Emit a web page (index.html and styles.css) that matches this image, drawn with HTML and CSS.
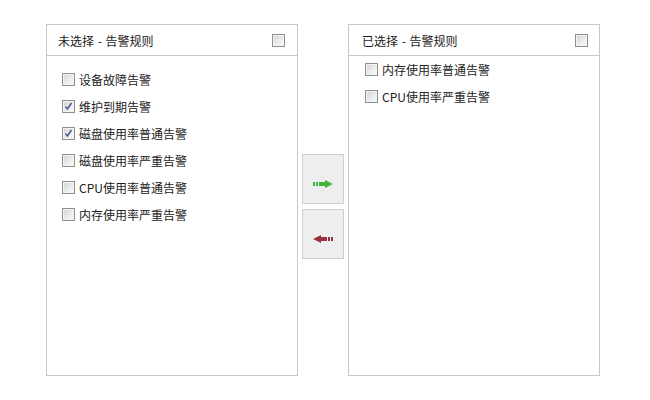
FILE: index.html
```html
<!DOCTYPE html>
<html lang="zh-CN">

<head>
    <meta charset="UTF-8" />
    <meta name="viewport" content="width=device-width, initial-scale=1.0" />
    <title>告警规则</title>
    <link rel="stylesheet" href="styles.css">
</head>

<body>
    <div class="transfer">
        <div class="panel panel-left">
            <div class="panel-head">
                <span>未选择 - 告警规则</span>
                <input type="checkbox" class="chk">
            </div>
            <ul class="rule-list">
                <li><label><input type="checkbox" class="chk">设备故障告警</label></li>
                <li><label><input type="checkbox" class="chk" checked>维护到期告警</label></li>
                <li><label><input type="checkbox" class="chk" checked>磁盘使用率普通告警</label></li>
                <li><label><input type="checkbox" class="chk">磁盘使用率严重告警</label></li>
                <li><label><input type="checkbox" class="chk">CPU使用率普通告警</label></li>
                <li><label><input type="checkbox" class="chk">内存使用率严重告警</label></li>
            </ul>
        </div>

        <div class="actions">
            <button class="move-btn" title="添加">
                <svg width="20" height="8" viewBox="0 0 20 8">
                    <rect x="0" y="2" width="2" height="4" fill="#3fb43f" />
                    <rect x="3" y="2" width="2" height="4" fill="#3fb43f" />
                    <rect x="6" y="2" width="7" height="4" fill="#3fb43f" />
                    <polygon points="12,0 20,4 12,8" fill="#3fb43f" />
                </svg>
            </button>
            <button class="move-btn" title="移除">
                <svg width="20" height="8" viewBox="0 0 20 8">
                    <polygon points="8,0 0,4 8,8" fill="#9c2f3d" />
                    <rect x="7" y="2" width="7" height="4" fill="#9c2f3d" />
                    <rect x="15" y="2" width="2" height="4" fill="#9c2f3d" />
                    <rect x="18" y="2" width="2" height="4" fill="#9c2f3d" />
                </svg>
            </button>
        </div>

        <div class="panel panel-right">
            <div class="panel-head">
                <span>已选择 - 告警规则</span>
                <input type="checkbox" class="chk">
            </div>
            <ul class="rule-list">
                <li><label><input type="checkbox" class="chk">内存使用率普通告警</label></li>
                <li><label><input type="checkbox" class="chk">CPU使用率严重告警</label></li>
            </ul>
        </div>
    </div>
</body>

</html>
```

FILE: styles.css
```css
body {
    margin: 0;
    background: #fff;
    color: #222;
    font-family: "Noto Sans CJK SC", "Microsoft YaHei", sans-serif;
    font-size: 12px;
}

.transfer {
    display: flex;
    align-items: flex-start;
    padding: 24px 0 0 46px;
}

.panel {
    width: 250px;
    height: 350px;
    border: 1px solid #c8c8c8;
    background: #fff;
}

.panel-head {
    display: flex;
    align-items: center;
    justify-content: space-between;
    height: 30px;
    border-bottom: 1px solid #c8c8c8;
    padding: 0 12px 0 11px;
}

.panel-right .panel-head {
    padding: 0 11px 0 13px;
}

.panel-head span {
    font-size: 12px;
    word-spacing: 1px;
    color: #1a1a1a;
}

.rule-list {
    list-style: none;
    margin: 0;
    padding: 10px 0 0 15px;
}

.panel-right .rule-list {
    padding: 0 0 0 16px;
}

.rule-list li {
    height: 27px;
    line-height: 27px;
}

.rule-list label {
    display: flex;
    align-items: center;
    height: 27px;
    cursor: pointer;
}

.chk {
    -webkit-appearance: none;
    appearance: none;
    width: 13px;
    height: 13px;
    margin: 0;
    border: 1px solid #8e8f8f;
    box-sizing: border-box;
    background: linear-gradient(135deg, #d2d2d2 0%, #eeeeee 60%, #fafafa 100%);
    box-shadow: inset 0 0 0 1px #f4f4f4;
    flex: none;
    cursor: pointer;
}

.rule-list .chk {
    margin-right: 4px;
}

.chk:checked {
    background: url("data:image/svg+xml,%3Csvg xmlns='http://www.w3.org/2000/svg' width='11' height='11' viewBox='0 0 11 11'%3E%3Cpath d='M2.5 5.5 L4.5 8 L8.5 2' fill='none' stroke='%234a5d99' stroke-width='1.6'/%3E%3C/svg%3E") center / 11px 11px no-repeat,
        linear-gradient(135deg, #d2d2d2 0%, #eeeeee 60%, #fafafa 100%);
}

.chk:focus {
    outline: none;
}

.actions {
    display: flex;
    flex-direction: column;
    gap: 5px;
    width: 50px;
    padding: 130px 0 0 4px;
    box-sizing: border-box;
}

.move-btn {
    display: flex;
    align-items: center;
    justify-content: center;
    width: 42px;
    height: 50px;
    padding: 10px 0 0;
    border: 1px solid #cfcfcf;
    background: #eeeeee;
    cursor: pointer;
}

.move-btn:hover {
    background: #e4e4e4;
}
```
